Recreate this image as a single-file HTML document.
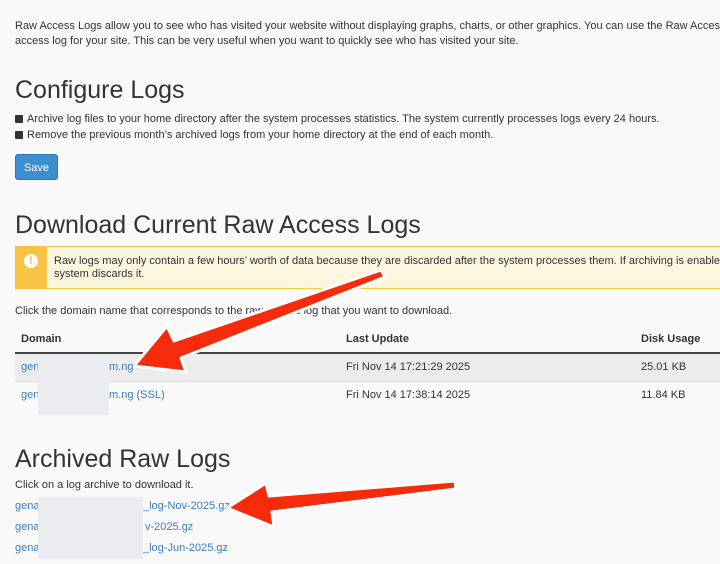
<!DOCTYPE html><html><head><style>
body{margin:0;width:720px;height:564px;overflow:hidden;background:#f9f9f9;font-family:"Liberation Sans",sans-serif;color:#333;position:relative}
.a{position:absolute;white-space:nowrap}
.t{font-size:11px}
h2{position:absolute;margin:0;font-weight:normal;font-size:25px;color:#333;white-space:nowrap;left:15px}
a{color:#3a7dc2;text-decoration:none}
.cb{display:inline-block;width:8px;height:8px;background:#333;border-radius:1px;margin-right:4px;vertical-align:-1px}
</style></head><body>
<div class="a t" style="left:15px;top:20px">Raw Access Logs allow you to see who has visited your website without displaying graphs, charts, or other graphics. You can use the Raw Access L</div>
<div class="a t" style="left:15px;top:35px">access log for your site. This can be very useful when you want to quickly see who has visited your site.</div>
<h2 style="top:76px">Configure Logs</h2>
<div class="a t" style="left:15px;top:113px"><span class="cb"></span>Archive log files to your home directory after the system processes statistics. The system currently processes logs every 24 hours.</div>
<div class="a t" style="left:15px;top:129px"><span class="cb"></span>Remove the previous month’s archived logs from your home directory at the end of each month.</div>
<div class="a" style="left:15px;top:154px;width:43px;height:26px;background:#3d8ed1;border:1px solid #2f74b0;border-radius:3px;color:#fff;font-size:11px;text-align:center;line-height:26px;box-sizing:border-box">Save</div>
<h2 style="top:211px">Download Current Raw Access Logs</h2>
<div class="a" style="left:15px;top:246px;width:720px;height:43px;background:#fdf6de;border:1px solid #f2c94c;box-sizing:border-box"></div>
<div class="a" style="left:15px;top:246px;width:32px;height:43px;background:#f6c342"></div>
<div class="a" style="left:24px;top:254px;width:14px;height:14px;border-radius:50%;background:#fff;color:#f6c342;font-size:11px;font-weight:bold;text-align:center;line-height:14px">!</div>
<div class="a t" style="left:54px;top:255px">Raw logs may only contain a few hours’ worth of data because they are discarded after the system processes them. If archiving is enabled</div>
<div class="a t" style="left:54px;top:268px">system discards it.</div>
<div class="a t" style="left:15px;top:305px">Click the domain name that corresponds to the raw access log that you want to download.</div>
<div class="a t" style="left:21px;top:333px;font-weight:bold">Domain</div>
<div class="a t" style="left:346px;top:333px;font-weight:bold">Last Update</div>
<div class="a t" style="left:641px;top:333px;font-weight:bold">Disk Usage</div>
<div class="a" style="left:15px;top:352px;width:705px;height:2px;background:#444"></div>
<div class="a" style="left:15px;top:354px;width:705px;height:27px;background:#ececec;border-bottom:1px solid #ddd"></div>
<div class="a t" style="left:21px;top:361px"><a>gen</a></div>
<div class="a t" style="left:109px;top:361px"><a>m.ng</a></div>
<div class="a t" style="left:346px;top:361px">Fri Nov 14 17:21:29 2025</div>
<div class="a t" style="left:641px;top:361px">25.01 KB</div>
<div class="a t" style="left:21px;top:389px"><a>gen</a></div>
<div class="a t" style="left:109px;top:389px"><a>m.ng (SSL)</a></div>
<div class="a t" style="left:346px;top:389px">Fri Nov 14 17:38:14 2025</div>
<div class="a t" style="left:641px;top:389px">11.84 KB</div>
<div class="a" style="left:38px;top:356px;width:71px;height:59px;background:#eaecf0"></div>
<h2 style="top:445px">Archived Raw Logs</h2>
<div class="a t" style="left:15px;top:479px">Click on a log archive to download it.</div>
<div class="a t" style="left:15px;top:500px"><a>gena</a></div>
<div class="a t" style="left:143px;top:500px"><a>_log-Nov-2025.gz</a></div>
<div class="a t" style="left:15px;top:521px"><a>gena</a></div>
<div class="a t" style="left:145px;top:521px"><a>v-2025.gz</a></div>
<div class="a t" style="left:15px;top:542px"><a>gena</a></div>
<div class="a t" style="left:143px;top:542px"><a>_log-Jun-2025.gz</a></div>
<div class="a" style="left:38px;top:497px;width:105px;height:62px;background:#eaecf0"></div>
<svg class="a" style="left:0;top:0" width="720" height="564">
<g fill="#f62b0b" stroke="#fff" stroke-width="3" stroke-linejoin="round">
<path d="M381 270 L385 277 L181 358 L186 372 L134 366 L167 326 L174 341 Z"/>
<path d="M455 481 L456 489 L272 512 L274 527 L227 508 L266 483 L269 496 Z"/>
</g></svg>
</body></html>
